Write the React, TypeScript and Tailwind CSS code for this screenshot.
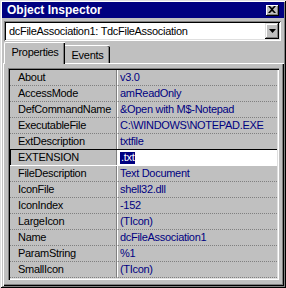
import React from 'react';

interface Prop {
  name: string;
  value: string;
}

const props: Prop[] = [
  { name: 'About', value: 'v3.0' },
  { name: 'AccessMode', value: 'amReadOnly' },
  { name: 'DefCommandName', value: '&Open with M$-Notepad' },
  { name: 'ExecutableFile', value: 'C:\\WINDOWS\\NOTEPAD.EXE' },
  { name: 'ExtDescription', value: 'txtfile' },
  { name: 'EXTENSION', value: '.txt' },
  { name: 'FileDescription', value: 'Text Document' },
  { name: 'IconFile', value: 'shell32.dll' },
  { name: 'IconIndex', value: '-152' },
  { name: 'LargeIcon', value: '(TIcon)' },
  { name: 'Name', value: 'dcFileAssociation1' },
  { name: 'ParamString', value: '%1' },
  { name: 'SmallIcon', value: '(TIcon)' },
];

const selected = 5;

function Row({ prop, index }: { prop: Prop; index: number }) {
  const isSel = index === selected;
  const beforeSel = index === selected - 1;

  const lineCls = isSel
    ? 'border-b border-solid border-white'
    : beforeSel
      ? 'border-b border-solid border-black'
      : 'border-b border-dotted border-[#808080]';

  return (
    <div className={`flex h-[16px] ${lineCls}`}>
      <div
        className={`w-[107px] shrink-0 flex items-center pl-[8px] text-black border-r border-[#808080] ${
          isSel ? 'shadow-[inset_1px_0_0_#000]' : ''
        }`}
      >
        {prop.name}
      </div>
      <div
        className={`flex-1 flex items-center border-l border-white pl-[2px] ${
          isSel ? 'bg-white' : 'text-[#000080]'
        }`}
      >
        {isSel ? (
          <span className="bg-[#000080] text-white h-[12px] flex items-center px-[1px]">{prop.value}</span>
        ) : (
          prop.value
        )}
      </div>
    </div>
  );
}

export default function App() {
  return (
    <div
      className="w-[286px] h-[288px] bg-[#c0c0c0] p-[2px] flex flex-col text-[11px] tracking-[-0.3px] leading-none shadow-[inset_1px_1px_0_#dfdfdf,inset_-1px_-1px_0_#000,inset_2px_2px_0_#fff,inset_-2px_-2px_0_#808080]"
      style={{ fontFamily: '"Liberation Sans", Arial, sans-serif' }}
    >
      {/* Title bar */}
      <div className="h-[16px] bg-[#000080] flex items-center justify-between pl-[5px] pr-[5px]">
        <span className="text-white font-bold text-[12px] tracking-normal">Object Inspector</span>
        <div className="w-[13px] h-[11px] bg-[#c0c0c0] flex items-center justify-center shadow-[inset_-1px_-1px_0_#000,inset_1px_1px_0_#fff,inset_-2px_-2px_0_#808080]">
          <svg width="8" height="7" viewBox="0 0 8 7" className="-mt-[1px] -ml-[1px]">
            <path d="M0 0h2l2 2 2-2h2L5 3.5 8 7H6L4 5 2 7H0l3-3.5z" fill="#000" />
          </svg>
        </div>
      </div>

      {/* Object selector */}
      <div className="mt-[3px] ml-[2px] mr-[3px] h-[20px] bg-white flex items-center justify-between pl-[5px] pr-[2px] shadow-[inset_1px_1px_0_#808080,inset_-1px_-1px_0_#fff,inset_2px_2px_0_#000,inset_-2px_-2px_0_#dfdfdf]">
        <span className="text-black">dcFileAssociation1: TdcFileAssociation</span>
        <div className="w-[14px] h-[16px] bg-[#c0c0c0] flex items-center justify-center shadow-[inset_-1px_-1px_0_#000,inset_1px_1px_0_#dfdfdf,inset_-2px_-2px_0_#808080,inset_2px_2px_0_#fff]">
          <svg width="7" height="4" viewBox="0 0 7 4">
            <path d="M0 0h7L3.5 4z" fill="#000" />
          </svg>
        </div>
      </div>

      {/* Tabs */}
      <div className="mt-[1px] h-[21px] flex items-end pl-[2px]">
        <div className="relative z-10 -mb-[1px] w-[61px] h-[22px] bg-[#c0c0c0] border-t border-l border-white rounded-tl-[2px] flex items-center justify-center pb-[2px] shadow-[inset_-1px_0_0_#000,inset_-2px_0_0_#808080] text-black">
          Properties
        </div>
        <div className="w-[45px] h-[18px] bg-[#c0c0c0] border-t border-white flex items-center justify-center shadow-[inset_-1px_0_0_#000,inset_-2px_0_0_#808080] rounded-tr-[2px] text-black pt-[1px]">
          Events
        </div>
      </div>

      {/* Tab page */}
      <div className="flex-1 ml-[1px] pl-[5px] pr-[5px] pt-[5px] shadow-[inset_1px_1px_0_#fff,inset_-1px_-1px_0_#000,inset_-2px_-2px_0_#808080]">
        <div className="h-[212px] p-[2px] shadow-[inset_1px_1px_0_#808080,inset_2px_2px_0_#000,inset_-1px_-1px_0_#fff,inset_-2px_-2px_0_#dfdfdf]">
          {props.map((p, i) => (
            <Row key={p.name} prop={p} index={i} />
          ))}
        </div>
      </div>
    </div>
  );
}
